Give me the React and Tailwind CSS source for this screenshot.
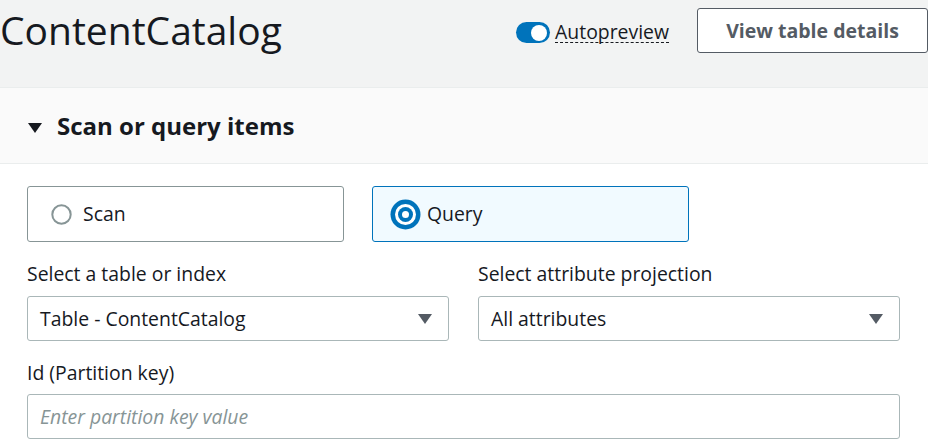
import { useState } from 'react';

const Caret = ({ className = '' }) => (
  <svg width="14" height="10" viewBox="0 0 14 10" className={className}>
    <path d="M0 0 H14 L7 10 Z" fill="currentColor" />
  </svg>
);

const RadioOff = () => (
  <svg width="21" height="21" viewBox="0 0 21 21">
    <circle cx="10.5" cy="10.5" r="9.2" fill="#fff" stroke="#879596" strokeWidth="2" />
  </svg>
);

const RadioOn = () => (
  <svg width="31" height="31" viewBox="0 0 31 31">
    <circle cx="15.5" cy="15.5" r="15" fill="#0073bb" />
    <circle cx="15.5" cy="15.5" r="10.5" fill="#fff" />
    <circle cx="15.5" cy="15.5" r="7.5" fill="#0073bb" />
    <circle cx="15.5" cy="15.5" r="3.5" fill="#fff" />
  </svg>
);

function SelectBox({ value }) {
  return (
    <div className="h-[45px] border border-[#aab7b8] rounded-[3px] bg-white flex items-center justify-between pl-[12px] pr-[16px]">
      <span className="text-[19.4px] text-[#16191f]">{value}</span>
      <Caret className="text-[#545b64]" />
    </div>
  );
}

export default function App() {
  const [mode, setMode] = useState('query');

  return (
    <div className="w-[928px] h-[446px] overflow-hidden bg-white text-[#16191f] font-['Open_Sans',sans-serif]">
      <header className="h-[88px] bg-[#f2f3f3] border-b border-[#eaeded] flex items-start justify-between">
        <h1 className="text-[39px] leading-none mt-[10px]">ContentCatalog</h1>
        <div className="flex items-start mt-[8px]">
          <div className="flex items-center gap-[5px] mt-[14px]">
            <div className="w-[34px] h-[21px] rounded-full bg-[#0073bb] flex items-center justify-end pr-[3px]">
              <div className="w-[16px] h-[16px] rounded-full bg-white" />
            </div>
            <span className="text-[19.4px] leading-[20px] border-b border-dashed border-[#16191f]">Autopreview</span>
          </div>
          <button className="ml-[28px] w-[231px] h-[45px] border border-[#545b64] rounded-[3px] bg-white text-[19.5px] font-bold text-[#545b64]">
            View table details
          </button>
        </div>
      </header>

      <div className="h-[76px] bg-[#fafafa] border-b border-[#eaeded] flex items-center pl-[28px] gap-[15px]">
        <Caret className="text-[#16191f] mt-[4px]" />
        <h2 className="text-[24px] font-bold">Scan or query items</h2>
      </div>

      <div className="pl-[27px] pr-[28px] pt-[22px]">
        <div className="flex gap-[28px]">
          <button
            onClick={() => setMode('scan')}
            className={`w-[317px] h-[56px] rounded-[3px] flex items-center gap-[11px] ${mode === 'scan' ? 'border border-[#0073bb] bg-[#f1faff]' : 'border border-[#879596] bg-white'} pl-[23px]`}
          >
            {mode === 'scan' ? <RadioOn /> : <RadioOff />}
            <span className="text-[19.4px]">Scan</span>
          </button>
          <button
            onClick={() => setMode('query')}
            className={`w-[317px] h-[56px] rounded-[3px] flex items-center gap-[6px] ${mode === 'query' ? 'border border-[#0073bb] bg-[#f1faff]' : 'border border-[#879596] bg-white'} pl-[17px]`}
          >
            {mode === 'query' ? <RadioOn /> : <RadioOff />}
            <span className="text-[19.4px]">Query</span>
          </button>
        </div>

        <div className="grid grid-cols-2 gap-x-[29px] mt-[20px]">
          <div>
            <div className="text-[19.4px] leading-[24px] mb-[10px]">Select a table or index</div>
            <SelectBox value="Table - ContentCatalog" />
          </div>
          <div>
            <div className="text-[19.4px] leading-[24px] mb-[10px]">Select attribute projection</div>
            <SelectBox value="All attributes" />
          </div>
        </div>

        <div className="mt-[20px]">
          <div className="text-[19.4px] leading-[24px] mb-[9px]">Id (Partition key)</div>
          <input
            placeholder="Enter partition key value"
            className="w-full h-[45px] border border-[#aab7b8] rounded-[3px] px-[12px] text-[19.4px] italic placeholder:text-[#879596] outline-none"
          />
        </div>
      </div>
    </div>
  );
}
